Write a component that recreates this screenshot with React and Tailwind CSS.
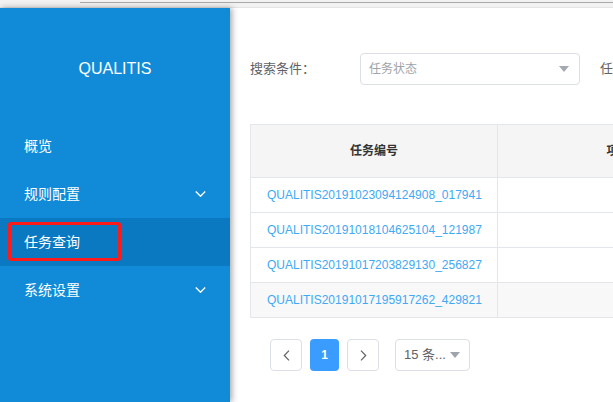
import React from "react";

const font = { fontFamily: '"Liberation Sans", Arial, "Noto Sans CJK SC", sans-serif' };

function Chevron() {
  return (
    <svg width="11" height="6" viewBox="0 0 11 6" fill="none">
      <path d="M0.8 0.6 L5.5 5.2 L10.2 0.6" stroke="white" strokeWidth="1.4" />
    </svg>
  );
}

function Tri({ color = "#a4a9b2" }) {
  return (
    <svg width="10" height="6" viewBox="0 0 10 6">
      <path d="M0 0 H10 L5 6 Z" fill={color} />
    </svg>
  );
}

const rows = [
  "QUALITIS20191023094124908_017941",
  "QUALITIS20191018104625104_121987",
  "QUALITIS20191017203829130_256827",
  "QUALITIS20191017195917262_429821",
];

export default function App() {
  return (
    <div className="w-full h-screen overflow-hidden flex flex-col bg-white" style={font}>
      <div className="relative h-[8px] shrink-0 bg-[#f2f2f2] border-b border-[#e4e4e4]">
        <div className="absolute top-[2px] left-[80px] right-0 h-px bg-[#a8a8a8]" />
      </div>
      <div className="flex flex-1 min-h-0">
        <div className="relative w-[230px] shrink-0 bg-[#118bd7] text-white shadow-[2px_0_6px_rgba(0,0,0,0.35)] z-10">
          <div className="h-[114px] pt-[50px] text-center text-[16px] leading-[22px]">QUALITIS</div>
          <div className="flex flex-col text-[14px]">
            <div className="h-[48px] flex items-center px-[24px]">概览</div>
            <div className="h-[48px] flex items-center justify-between pl-[24px] pr-[24px]">
              <span>规则配置</span>
              <Chevron />
            </div>
            <div className="h-[48px] flex items-center px-[24px] bg-[#0a79c2]">任务查询</div>
            <div className="h-[48px] flex items-center justify-between pl-[24px] pr-[24px]">
              <span>系统设置</span>
              <Chevron />
            </div>
          </div>
          <div className="absolute left-[8px] top-[214px] w-[113px] h-[39px] border-[3px] border-[#ff1a1a] rounded-[3px]" />
        </div>
        <div className="flex-1 min-w-0 overflow-hidden pl-[20px] pt-[45px]">
          <div className="flex items-center h-[32px] whitespace-nowrap">
            <div className="w-[110px] shrink-0 text-[13px] text-[#606266]">搜索条件：</div>
            <div className="w-[220px] h-[32px] shrink-0 border border-[#dcdfe6] rounded-[4px] flex items-center justify-between pl-[8px] pr-[10px]">
              <span className="text-[12px] text-[#a0a3a8]">任务状态</span>
              <Tri />
            </div>
            <div className="ml-[20px] shrink-0 text-[13px] text-[#606266]">任务名称</div>
          </div>
          <div className="mt-[39px] w-[600px] border-l border-t border-[#e3e6eb]">
            <div className="flex h-[53px] bg-[#f5f5f5] border-b border-[#e3e6eb]">
              <div className="w-[247px] shrink-0 border-r border-[#e3e6eb] flex items-center justify-center text-[12px] font-bold text-[#333]">任务编号</div>
              <div className="w-[266px] shrink-0 border-r border-[#e3e6eb] flex items-center justify-center text-[12px] font-bold text-[#333]">项目名称</div>
            </div>
            {rows.map((r, i) => (
              <div key={r} className={"flex h-[35px] border-b border-[#e3e6eb] " + (i === 3 ? "bg-[#f8f8f9]" : "bg-white")}>
                <div className="w-[247px] shrink-0 border-r border-[#e3e6eb] flex items-center pl-[16px] text-[12px] text-[#40a9f5]">{r}</div>
                <div className="w-[266px] shrink-0 border-r border-[#e3e6eb]" />
              </div>
            ))}
          </div>
          <div className="mt-[21px] ml-[20px] flex items-center h-[32px]">
            <div className="w-[32px] h-[32px] border border-[#dcdfe6] rounded-[4px] flex items-center justify-center">
              <svg width="7" height="11" viewBox="0 0 7 11" fill="none"><path d="M6 0.7 L1.3 5.5 L6 10.3" stroke="#606266" strokeWidth="1.2" /></svg>
            </div>
            <div className="ml-[8px] w-[29px] h-[32px] rounded-[4px] bg-[#3a9cfe] text-white text-[12px] font-bold flex items-center justify-center">1</div>
            <div className="ml-[8px] w-[32px] h-[32px] border border-[#dcdfe6] rounded-[4px] flex items-center justify-center">
              <svg width="7" height="11" viewBox="0 0 7 11" fill="none"><path d="M1 0.7 L5.7 5.5 L1 10.3" stroke="#606266" strokeWidth="1.2" /></svg>
            </div>
            <div className="ml-[16px] w-[75px] h-[32px] border border-[#dcdfe6] rounded-[4px] flex items-center justify-between pl-[8px] pr-[9px]">
              <span className="text-[13px] text-[#606266] whitespace-nowrap">15 条...</span>
              <Tri color="#a0a5ad" />
            </div>
          </div>
        </div>
      </div>
    </div>
  );
}
